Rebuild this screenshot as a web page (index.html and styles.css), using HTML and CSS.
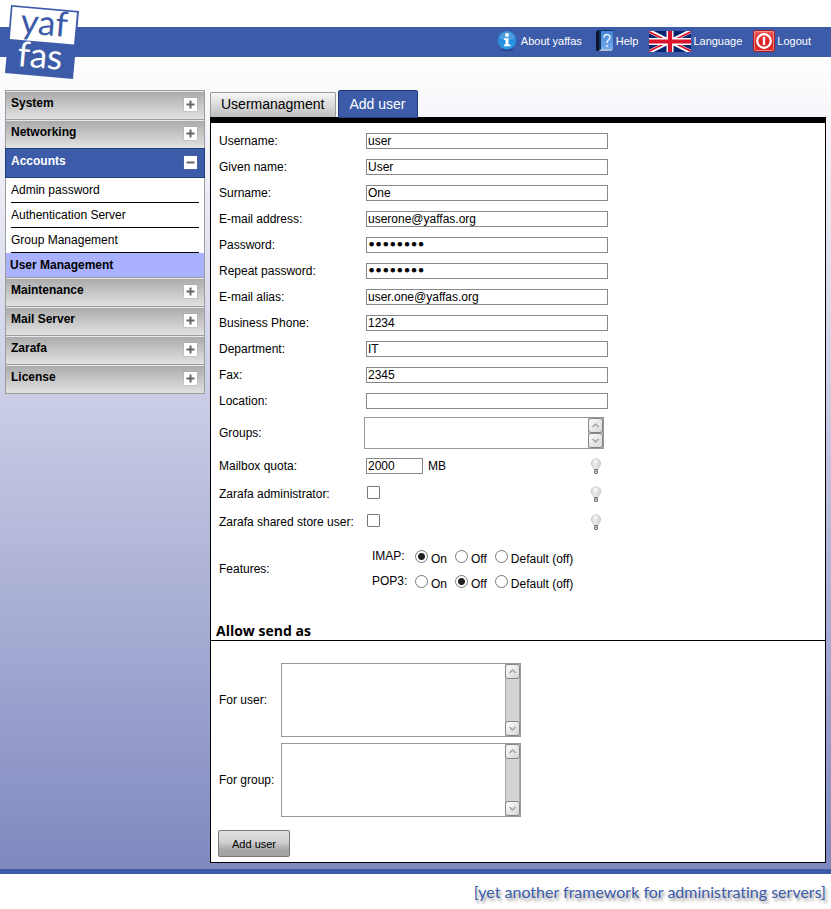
FILE: index.html
```html
<!DOCTYPE html>
<html lang="en">
<head>
<meta charset="utf-8">
<title>yaffas</title>
<link rel="stylesheet" href="styles.css">
</head>
<body>
<svg class="defs" aria-hidden="true">
  <defs>
    <linearGradient id="steel" x1="0" y1="0" x2="1" y2="1"><stop offset="0" stop-color="#ffffff"/><stop offset="1" stop-color="#d4d4d2"/></linearGradient>
    <linearGradient id="glass" x1="0" y1="0" x2="1" y2="0"><stop offset="0" stop-color="#d2d2d2"/><stop offset=".4" stop-color="#fafafa"/><stop offset="1" stop-color="#cfcfcf"/></linearGradient>
    <linearGradient id="sky" x1="0" y1="0" x2="0" y2="1"><stop offset="0" stop-color="#1f78c8"/><stop offset="1" stop-color="#2ba0ee"/></linearGradient>
    <linearGradient id="cover" x1="0" y1="0" x2="0" y2="1"><stop offset="0" stop-color="#4383d4"/><stop offset="1" stop-color="#72aaec"/></linearGradient>
    <linearGradient id="ruby" x1="0" y1="0" x2="0" y2="1"><stop offset="0" stop-color="#ef6464"/><stop offset=".5" stop-color="#dc2222"/><stop offset="1" stop-color="#d83030"/></linearGradient>
    <symbol id="plus" viewBox="0 0 13 13"><rect width="13" height="13" fill="#fff"/><path d="M2.500 6.500H10.500M6.500 2.500V10.500" stroke="#666" stroke-width="2"/></symbol>
    <symbol id="minus" viewBox="0 0 13 13"><rect width="13" height="13" fill="#fff"/><path d="M2.500 6.500H10.500" stroke="#666" stroke-width="2"/></symbol>
    <symbol id="up" viewBox="0 0 15 15"><path d="M.5.500H14.500V14.500H.5Z" fill="#b5b5b3"/><rect x=".5" y=".5" width="14" height="14" rx="2.500" fill="url(#steel)" stroke="#858585"/><path d="M4.500 9L7.500 6L10.500 9" fill="none" stroke="#a0a0a0" stroke-width="1.400"/></symbol>
    <symbol id="down" viewBox="0 0 15 15"><path d="M.5.500H14.500V14.500H.5Z" fill="#b5b5b3"/><rect x=".5" y=".5" width="14" height="14" rx="2.500" fill="url(#steel)" stroke="#858585"/><path d="M4.500 6L7.500 9L10.500 6" fill="none" stroke="#a0a0a0" stroke-width="1.400"/></symbol>
    <symbol id="bulb" viewBox="0 0 12 17"><path d="M6 .8C3 .8 1.200 3 1.200 5.200C1.200 7.800 3.600 9 3.900 11.500H8.100C8.400 9 10.800 7.800 10.800 5.200C10.800 3 9 .8 6 .8Z" fill="url(#glass)" stroke="#c4c4c4" stroke-width=".8"/><path d="M4.500 5L5.300 11M7.500 5L6.700 11" stroke="#c6c6c6" stroke-width=".6"/><path d="M4 11H8V14.500L7 16H5L4 14.500Z" fill="#6e6e6e"/><path d="M4 12.300H8" stroke="#bbb"/><circle cx="6" cy="14.200" r=".9" fill="#eee"/></symbol>
  </defs>
</svg>

<header class="topbar">
  <a class="logo" href="#" aria-label="yaffas">
    <svg width="84" height="84" viewBox="0 0 84 84" aria-hidden="true">
      <path d="M11 5L79 11L73 79L5 73Z" fill="#3c5ba9"/>
      <path d="M12.500 6.800L77 12.600L74 44.500L9.800 39Z" fill="#fff"/>
      <g transform="rotate(5 42 42)">
        <text class="logo-text yaf" x="19" y="35">yaf</text>
        <text class="logo-text fas" x="19" y="68">fas</text>
      </g>
    </svg>
  </a>
  <nav class="tools" aria-label="Tools">
    <a href="#">
      <svg width="20" height="22" viewBox="0 0 20 22" aria-hidden="true"><ellipse cx="10" cy="20" rx="7" ry="1.300" fill="#294a91"/><circle cx="10" cy="10" r="9.300" fill="url(#sky)"/><path d="M2 8C3 3 7 1.500 10 1.500S17 3 18 8C13 11 7 11 2 8Z" fill="#fff" opacity=".2"/><circle cx="10" cy="5" r="2" fill="#fff"/><path d="M7 8.300H11.500V14.500H13.500V16.300H7V14.500H8.500V10H7Z" fill="#fff"/></svg>
      <span>About yaffas</span>
    </a>
    <a href="#">
      <svg width="18" height="22" viewBox="0 0 18 22" aria-hidden="true"><path d="M0 2L2 0H17V19L15 21H0Z" fill="#123463"/><path d="M5 1H17V19H5Z" fill="url(#cover)"/><path d="M5 19H17L15.500 21H3Z" fill="#a9bfd8"/><path d="M0 2L3 0V20L0 21Z" fill="#09152b"/><path d="M8 7.500C8 3.500 14 3.700 14 7.300C14 9.800 11 9.800 11 13" fill="none" stroke="#e8f2ff" stroke-width="1.600"/><circle cx="11" cy="16" r="1.100" fill="#e8f2ff"/></svg>
      <span>Help</span>
    </a>
    <a class="flag" href="#">
      <svg width="42" height="21" viewBox="0 0 60 30" aria-hidden="true"><path d="M0 0H60V30H0Z" fill="#06246f"/><path d="M0 0L60 30M60 0L0 30" stroke="#fff" stroke-width="6"/><path d="M0 1L28 15M32 15L60 29M60 1L32 15M28 15L0 29" stroke="#d8132b" stroke-width="2.500"/><path d="M30 0V30M0 15H60" stroke="#fff" stroke-width="10"/><path d="M30 0V30M0 15H60" stroke="#d8132b" stroke-width="6"/></svg>
      <span>Language</span>
    </a>
    <a href="#">
      <svg width="22" height="22" viewBox="0 0 22 22" aria-hidden="true"><rect x=".5" y=".5" width="21" height="21" rx="2" fill="url(#ruby)" stroke="#a31c1c"/><rect x="1.500" y="1.500" width="19" height="19" rx="1" fill="none" stroke="#f7a6a6" stroke-width=".7"/><circle cx="11" cy="11" r="6.800" fill="none" stroke="#fff" stroke-width="2.200"/><path d="M11 7V15" stroke="#fff" stroke-width="2.400"/></svg>
      <span>Logout</span>
    </a>
  </nav>
</header>

<div class="page">
  <nav class="menu" aria-label="Main menu">
    <button type="button" class="section">System<svg width="13" height="13"><use href="#plus"/></svg></button>
    <button type="button" class="section">Networking<svg width="13" height="13"><use href="#plus"/></svg></button>
    <button type="button" class="section open" aria-expanded="true">Accounts<svg width="13" height="13"><use href="#minus"/></svg></button>
    <ul class="entries">
      <li><a href="#">Admin password</a></li>
      <li><a href="#">Authentication Server</a></li>
      <li><a href="#">Group Management</a></li>
      <li class="current"><a href="#" aria-current="page">User Management</a></li>
    </ul>
    <button type="button" class="section">Maintenance<svg width="13" height="13"><use href="#plus"/></svg></button>
    <button type="button" class="section">Mail Server<svg width="13" height="13"><use href="#plus"/></svg></button>
    <button type="button" class="section">Zarafa<svg width="13" height="13"><use href="#plus"/></svg></button>
    <button type="button" class="section">License<svg width="13" height="13"><use href="#plus"/></svg></button>
  </nav>

  <main class="content">
    <div class="tabs">
      <a class="tab" href="#">Usermanagment</a>
      <a class="tab active" href="#">Add user</a>
    </div>
    <form class="panel">
      <div class="fields">
        <div class="row"><label for="username">Username:</label><input class="text" id="username" type="text" value="user"></div>
        <div class="row"><label for="given">Given name:</label><input class="text" id="given" type="text" value="User"></div>
        <div class="row"><label for="surname">Surname:</label><input class="text" id="surname" type="text" value="One"></div>
        <div class="row"><label for="email">E-mail address:</label><input class="text" id="email" type="text" value="userone@yaffas.org"></div>
        <div class="row"><label for="pass">Password:</label><input class="text secret" id="pass" type="password" value="password"></div>
        <div class="row"><label for="pass2">Repeat password:</label><input class="text secret" id="pass2" type="password" value="password"></div>
        <div class="row"><label for="alias">E-mail alias:</label><input class="text" id="alias" type="text" value="user.one@yaffas.org"></div>
        <div class="row"><label for="phone">Business Phone:</label><input class="text" id="phone" type="text" value="1234"></div>
        <div class="row"><label for="dept">Department:</label><input class="text" id="dept" type="text" value="IT"></div>
        <div class="row"><label for="fax">Fax:</label><input class="text" id="fax" type="text" value="2345"></div>
        <div class="row"><label for="location">Location:</label><input class="text" id="location" type="text"></div>
        <div class="row groups"><label for="groups">Groups:</label>
          <div class="listbox short"><select id="groups" multiple></select><span class="scroll"><svg width="15" height="15"><use href="#up"/></svg><svg width="15" height="15"><use href="#down"/></svg></span></div>
        </div>
        <div class="row option"><label for="quota">Mailbox quota:</label>
          <div class="value"><input class="text small" id="quota" type="text" value="2000"><span>MB</span><svg class="hint" width="12" height="17"><use href="#bulb"/></svg></div>
        </div>
        <div class="row option"><label for="admin">Zarafa administrator:</label>
          <div class="value"><input class="check" id="admin" type="checkbox"><svg class="hint" width="12" height="17"><use href="#bulb"/></svg></div>
        </div>
        <div class="row option"><label for="shared">Zarafa shared store user:</label>
          <div class="value"><input class="check" id="shared" type="checkbox"><svg class="hint" width="12" height="17"><use href="#bulb"/></svg></div>
        </div>
        <div class="row features"><span>Features:</span>
          <div class="protocols">
            <div class="protocol" role="radiogroup" aria-label="IMAP"><span>IMAP:</span>
              <label><input type="radio" name="imap" checked><span>On</span></label>
              <label><input type="radio" name="imap"><span>Off</span></label>
              <label><input type="radio" name="imap"><span>Default (off)</span></label>
            </div>
            <div class="protocol" role="radiogroup" aria-label="POP3"><span>POP3:</span>
              <label><input type="radio" name="pop3"><span>On</span></label>
              <label><input type="radio" name="pop3" checked><span>Off</span></label>
              <label><input type="radio" name="pop3"><span>Default (off)</span></label>
            </div>
          </div>
        </div>
      </div>
      <h2>Allow send as</h2>
      <div class="send-as">
        <label for="foruser">For user:</label>
        <div class="listbox"><select id="foruser" multiple></select><span class="scroll"><svg width="15" height="15"><use href="#up"/></svg><svg width="15" height="15"><use href="#down"/></svg></span></div>
        <label for="forgroup">For group:</label>
        <div class="listbox"><select id="forgroup" multiple></select><span class="scroll"><svg width="15" height="15"><use href="#up"/></svg><svg width="15" height="15"><use href="#down"/></svg></span></div>
      </div>
      <button class="submit" type="submit">Add user</button>
    </form>
  </main>
</div>
<footer>[yet another framework for administrating servers]</footer>
</body>
</html>
```
FILE: styles.css
```css
* { box-sizing: border-box; }
body {
  margin: 0;
  background: #fff;
  color: #000;
  font: 12px/16px "Liberation Sans", Arial, sans-serif;
}
a { color: inherit; text-decoration: none; }
button, input, select { font: inherit; color: inherit; margin: 0; }
svg { display: block; flex: none; }
.defs { position: absolute; width: 0; height: 0; }

.topbar {
  position: relative;
  margin-top: 27px;
  height: 30px;
  padding-right: 20px;
  background: #3c5ba9;
  display: flex;
  justify-content: flex-end;
}
.logo { position: absolute; left: 0; top: -27px; }
.logo svg { overflow: visible; }
.logo-text { font: 35px Lato, sans-serif; }
.yaf { fill: #3c5ba9; }
.fas { fill: #fff; }
.tools {
  display: flex;
  align-items: center;
  gap: 11px;
  color: #fff;
  font-size: 11px;
}
.tools a { display: flex; align-items: center; gap: 2px; }
.tools a:first-child { gap: 4px; margin-right: 3px; }
.tools svg { margin-bottom: 2px; }
.tools .flag svg { margin-bottom: 1px; }
.tools span { padding-bottom: 3px; }

.page {
  display: flex;
  align-items: flex-start;
  gap: 5px;
  padding: 33px 5px 6px;
  background: linear-gradient(#fff, #8088c0);
  border-bottom: 5px solid #3c5ba9;
}
.menu {
  flex: none;
  width: 200px;
  border: 1px solid #9c9c9c;
  border-top: 0;
}
.section {
  display: flex;
  justify-content: space-between;
  width: 100%;
  height: 29px;
  padding: 3px 7px 0 5px;
  border: 0;
  border-top: 1px solid #9c9c9c;
  background: linear-gradient(#a9a9a9, #e2e2e2);
  box-shadow: inset 0 1px #e6e6ec;
  font-weight: bold;
  line-height: 18px;
  text-align: left;
}
.section svg { margin-top: 4px; box-shadow: 0 0 1px #888; }
.section.open {
  width: 200px;
  height: 30px;
  margin-left: -1px;
  padding: 3px 7px 0 5px;
  border: 1px solid #203c7b;
  background: #3c5ba9;
  box-shadow: none;
  color: #fff;
}
.entries { margin: 0; padding: 0; list-style: none; background: #fff; }
.entries li { margin: 0 5px; height: 25px; line-height: 24px; border-bottom: 1px solid #000; }
.entries a { display: block; }
.entries .current {
  height: 24px;
  margin: 0;
  padding-left: 4px;
  border: 0;
  background: #aab2ff;
  font-weight: bold;
}

.content { flex: 1; min-width: 0; }
.tabs { display: flex; align-items: flex-end; gap: 2px; height: 27px; }
.tab {
  height: 25px;
  padding: 0 10px;
  border: 1px solid #999;
  border-bottom: 0;
  border-radius: 2px 2px 0 0;
  background: linear-gradient(#f7f7f7, #bdbdbd);
  font-size: 14px;
  line-height: 23px;
}
.tab.active {
  position: relative;
  height: 28px;
  margin-bottom: -1px;
  padding: 0 11px;
  border: 1px solid #203c7b;
  background: #3c5ba9;
  color: #fff;
  line-height: 27px;
}
.panel {
  border: 1px solid #000;
  border-top-width: 6px;
  background: #fff;
  padding-bottom: 5px;
}
.fields { padding: 5px 8px 0; }
.row {
  display: grid;
  grid-template-columns: 145px 244px;
  align-items: center;
  height: 26px;
}
.text {
  height: 16px;
  margin-left: 2px;
  padding: 0 1px;
  border: 1px solid #888;
  border-radius: 0;
  background: #fff;
  line-height: 14px;
}
.small { width: 57px; }
.secret { font-family: "DejaVu Sans", sans-serif; -webkit-text-stroke: 1px #000; }
.row.groups { height: 38px; }
.row.option { height: 28px; }
.value { display: flex; align-items: center; gap: 5px; width: 240px; height: 20px; }
.value .hint { margin: 0 2px 0 auto; }
.check {
  appearance: none;
  width: 13px;
  height: 13px;
  margin: 0 0 4px 3px;
  border: 1px solid #777;
  border-radius: 1px;
  background: #fff;
}
.listbox {
  display: flex;
  width: 240px;
  height: 74px;
  border: 1px solid #999;
  background: #fff;
}
.listbox.short { height: 32px; }
.listbox select {
  flex: 1;
  min-width: 0;
  height: 100%;
  padding: 0;
  border: 0;
  background: #fff;
}
.scroll {
  display: flex;
  flex-direction: column;
  justify-content: space-between;
  background: #d4d3d1;
  box-shadow: inset 1px 0 #aaa, inset -1px 0 #aaa;
}
.row.features { height: 65px; }
.protocols { padding: 8px 8px 0; }
.protocol { display: flex; height: 25px; white-space: nowrap; }
.protocol > span { width: 43px; }
.protocol label { display: flex; margin-right: 8px; }
.protocol label span { margin: 3px 0 0 3px; }
.protocol input {
  appearance: none;
  width: 13px;
  height: 13px;
  margin-top: 2px;
  border: 1px solid #777;
  border-radius: 50%;
  background: #fff;
}
.protocol input:checked { background: radial-gradient(circle, #222 0 3px, #fff 4px); }
.panel h2 {
  margin: 20px 0 0;
  padding-left: 5px;
  border-bottom: 1px solid #000;
  font: bold 14px/19px "Open Sans", sans-serif;
}
.send-as {
  display: grid;
  grid-template-columns: 62px 240px;
  align-items: center;
  gap: 6px 0;
  padding: 22px 8px 13px;
}
.submit {
  display: block;
  height: 27px;
  margin-left: 7px;
  padding: 0 13px;
  border: 1px solid #777;
  border-radius: 2px;
  background: linear-gradient(#e2e2e2, #cfcfcf 45%, #a5a7a8 75%, #9fa1a2);
  font-size: 11px;
}
footer {
  padding: 6px 5px 0;
  color: #3c5ba9;
  font: 16px/24px Lato, sans-serif;
  font-variant-ligatures: none;
  text-align: right;
  text-shadow: 2px 3px 3px #999;
}
```
